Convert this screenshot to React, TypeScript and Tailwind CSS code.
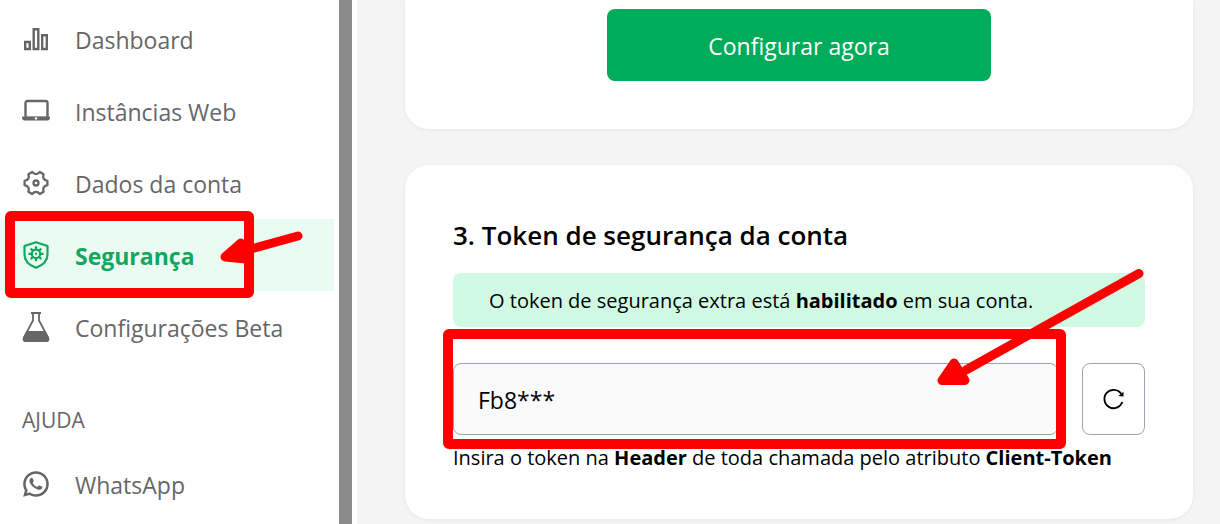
import React from 'react';
import { RiWhatsappLine } from 'react-icons/ri';

interface NavItemProps {
  label: string;
  icon: React.ReactNode;
  active?: boolean;
  children?: React.ReactNode;
}

const BarsIcon = () => (
  <svg viewBox="0 0 28 28" className="size-7" fill="none" stroke="currentColor" strokeWidth="2.4">
    <path d="M3.2 17h4.6v7H3.2zM11.7 4.2h4.6V24h-4.6zM20.2 10.2h4.6V24h-4.6z" />
  </svg>
);

const LaptopIcon = () => (
  <svg viewBox="0 0 28 28" className="size-7">
    <rect x="3.5" y="4" width="22" height="17" rx="2" fill="none" stroke="currentColor" strokeWidth="2.4" />
    <path d="M0 19.5h28V21q-.4 2.5-2.6 2.5H2.6Q.4 23.5 0 21z" fill="currentColor" />
    <circle cx="14" cy="21.4" r="1.2" fill="#fff" />
  </svg>
);

const GearIcon = () => (
  <svg viewBox="0 0 28 28" className="size-7" fill="none" stroke="currentColor" strokeWidth="2.3" strokeLinejoin="round">
    <path d="M25.4 11.8V16.2Q19.9 17.4 21.6 22.7L17.8 25Q14 20.8 10.2 25L6.4 22.7Q8.1 17.4 2.6 16.2V11.8Q8.1 10.6 6.4 5.3L10.2 3Q14 7.2 17.8 3L21.6 5.3Q19.9 10.6 25.4 11.8Z" />
    <circle cx="14" cy="14" r="2.5" />
  </svg>
);

const ShieldIcon = () => (
  <svg viewBox="0 0 28 28" className="size-7" fill="none" stroke="currentColor" strokeWidth="2.2">
    <path d="M14 1.2 25.5 5v8.5c0 6.3-4.8 10.8-11.5 13.3C7.3 24.3 2.5 19.8 2.5 13.5V5z" strokeLinejoin="round" />
    <circle cx="14" cy="12.8" r="4.2" />
    <circle cx="14" cy="12.8" r="1.2" fill="currentColor" stroke="none" />
    <path d="M14 5.3v3M14 17.3v3M6.5 12.8h3M18.5 12.8h3M8.7 7.5l2.1 2.1M17.2 16l2.1 2.1M8.7 18.1l2.1-2.1M17.2 9.6l2.1-2.1" />
  </svg>
);

const FlaskIcon = () => (
  <svg viewBox="0 0 28 30" className="h-[30px] w-7">
    <path d="M9 1h10" stroke="currentColor" strokeWidth="2" />
    <path
      d="M11 1.5V8.5L1.8 25.5Q.8 29 4 29H24Q27.2 29 26.2 25.5L17 8.5V1.5"
      fill="none"
      stroke="currentColor"
      strokeWidth="1.8"
    />
    <path d="M5 19H23L27 26Q28 30 24 30H4Q0 30 1 26Z" fill="currentColor" />
  </svg>
);

const ReloadIcon = () => (
  <svg viewBox="0 0 24 24" className="size-6">
    <path d="M20.3 15A9.2 9.2 0 1 1 19.2 6.8" fill="none" stroke="currentColor" strokeWidth="1.8" />
    <path d="M21.5 4.8V9.5L16.4 9z" fill="currentColor" />
  </svg>
);

const NavItem: React.FC<NavItemProps> = ({ label, icon, active = false, children }) => (
  <li className="relative">
    <a
      href="#"
      className={
        active
          ? 'mr-[5px] flex h-18 items-center gap-[25px] bg-[#eafbf4] pl-[22px] font-bold text-[#11a75c]'
          : 'mr-[5px] flex h-18 items-center gap-[25px] pl-[22px] text-[#666]'
      }
    >
      {icon}
      <span className="pt-0.5 text-[23px] leading-9">{label}</span>
    </a>
    {children}
  </li>
);

const Sidebar = () => (
  <nav className="w-[339px] shrink-0 bg-white pt-[3px]">
    <ul>
      <NavItem label="Dashboard" icon={<BarsIcon />} />
      <NavItem label="Instâncias Web" icon={<LaptopIcon />} />
      <NavItem label="Dados da conta" icon={<GearIcon />} />
      <NavItem label="Segurança" icon={<ShieldIcon />} active>
        <div className="pointer-events-none absolute -top-2 -bottom-[7px] left-[5px] z-10 w-[249px] rounded-md border-10 border-[#f00]" />
        <svg
          viewBox="0 0 90 40"
          className="pointer-events-none absolute top-2.5 left-[215px] z-10 h-10 w-[90px]"
          fill="#f00"
          stroke="#f00"
          strokeLinecap="round"
          strokeLinejoin="round"
          strokeWidth="9"
        >
          <path d="M83 7 36 20" />
          <path d="M10 28 26 14 31 30z" />
        </svg>
      </NavItem>
      <NavItem label="Configurações Beta" icon={<FlaskIcon />} />
    </ul>
    <h2 className="pt-[39px] pb-2.5 pl-[22px] text-[21px] leading-9 text-[#666]">AJUDA</h2>
    <ul>
      <NavItem label="WhatsApp" icon={<RiWhatsappLine className="size-7 scale-110" />} />
    </ul>
  </nav>
);

const TokenCard = () => (
  <section className="rounded-3xl bg-white px-12 pt-[46px] pb-[43px] shadow-[0_1px_4px_rgba(0,0,0,0.06)]">
    <h2 className="text-[26px] leading-[48px] font-[650]">3. Token de segurança da conta</h2>
    <p className="mt-3.5 rounded-lg bg-[#d0fae4] px-9 pt-2.5 pb-2 text-[20px] leading-9">
      O token de segurança extra está <strong>habilitado</strong> em sua conta.
    </p>
    <div className="mt-9 flex gap-6">
      <div className="relative flex-1">
        <input
          aria-label="Token"
          readOnly
          value="Fb8***"
          className="h-18 w-full rounded-lg border border-[#9ca3af] bg-[#fafafa] px-6 pt-0.5 text-[23px]"
        />
        <div className="pointer-events-none absolute -top-[34px] -right-2 -bottom-[14px] -left-2.5 z-10 rounded-md border-10 border-[#f00]" />
        <svg
          viewBox="0 0 210 120"
          className="pointer-events-none absolute -top-[94px] -right-[88px] z-10 h-[120px] w-[210px]"
          fill="#f00"
          stroke="#f00"
          strokeLinecap="round"
          strokeLinejoin="round"
          strokeWidth="9"
        >
          <path d="M203 4.5 30 101" />
          <path d="M6 111.5 18 94 29 111.5z" />
        </svg>
      </div>
      <button
        aria-label="Gerar novo token"
        className="flex w-[63px] items-center justify-center rounded-lg border border-[#9ca3af]"
      >
        <ReloadIcon />
      </button>
    </div>
    <p className="mt-[5px] text-[20px] leading-9">
      Insira o token na <strong>Header</strong> de toda chamada pelo atributo <strong>Client-Token</strong>
    </p>
  </section>
);

export default function App() {
  return (
    <div className="flex min-h-screen bg-white font-['Open_Sans','Noto_Sans',sans-serif] text-black">
      <Sidebar />
      <div className="w-[13px] shrink-0 bg-[#8b8b8b]" />
      <main className="ml-[5px] flex min-w-0 flex-1 flex-col gap-9 bg-[#f4f4f4] pr-[27px] pl-12">
        <section className="flex justify-center rounded-b-3xl bg-white px-12 pt-[9px] pb-12 shadow-[0_1px_4px_rgba(0,0,0,0.06)]">
          <button className="h-18 w-96 rounded-lg bg-[#00ab59] pt-0.5 text-[23px] text-white">Configurar agora</button>
        </section>
        <TokenCard />
      </main>
    </div>
  );
}
